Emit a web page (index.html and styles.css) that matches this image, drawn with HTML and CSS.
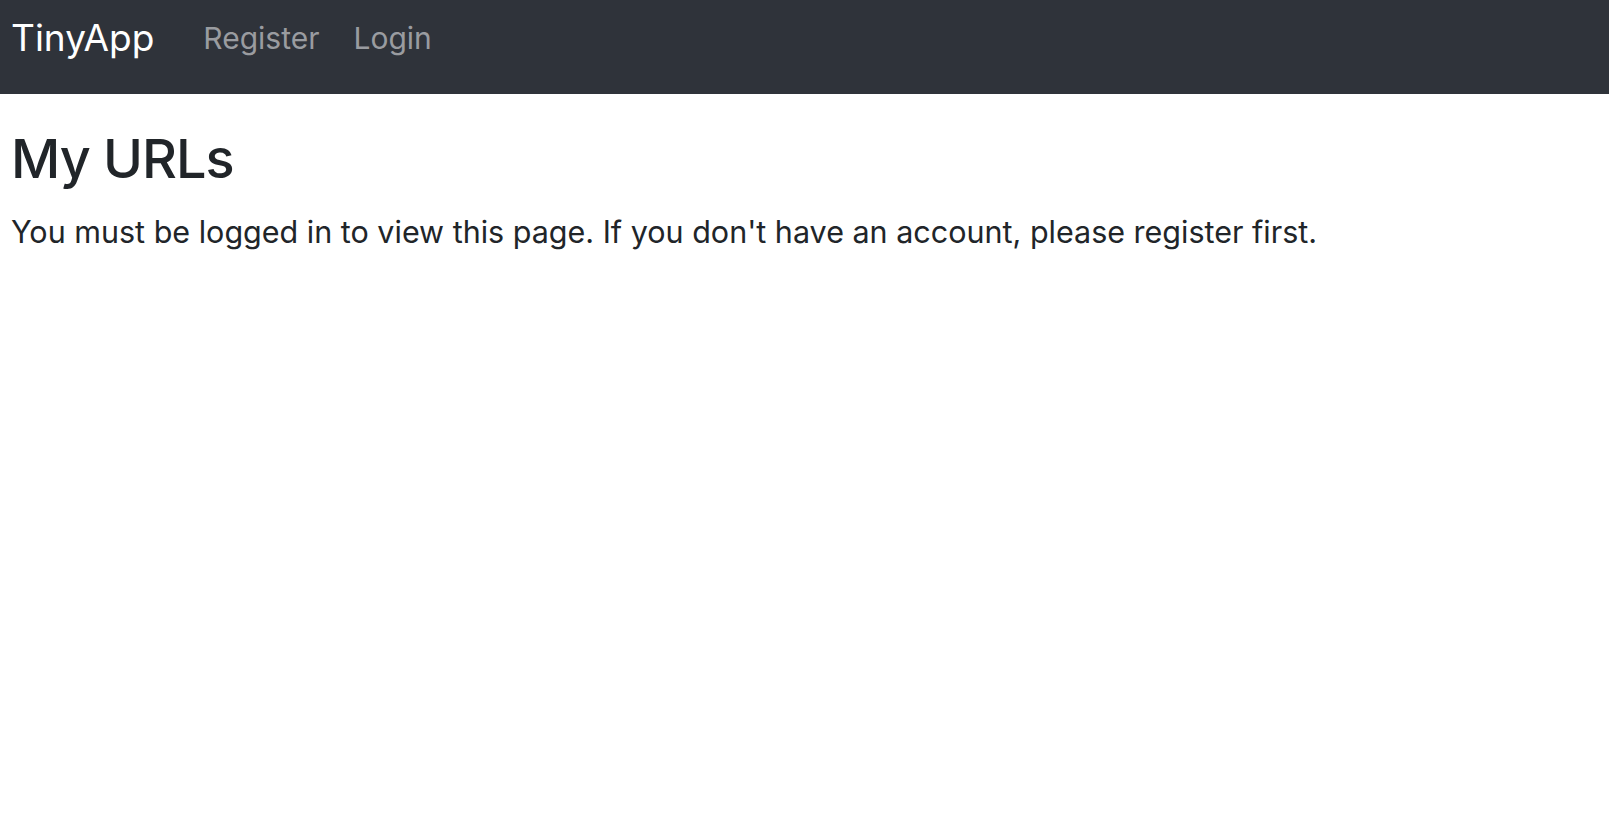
FILE: index.html
```html
<!DOCTYPE html>
<html lang="en">
<head>
<meta charset="utf-8">
<title>TinyApp</title>
<link rel="stylesheet" href="styles.css">
</head>
<body>
<nav class="navbar">
  <a class="brand" href="#">TinyApp</a>
  <div class="nav-links">
    <a class="nav-link" href="#">Register</a>
    <a class="nav-link" href="#">Login</a>
  </div>
</nav>
<main class="content">
  <h1 class="title">My URLs</h1>
  <p class="message">You must be logged in to view this page. If you don't have an account, please register first.</p>
</main>
</body>
</html>
```
FILE: styles.css
```css
html, body {
  margin: 0;
  padding: 0;
  background: #ffffff;
  font-family: Inter, "Liberation Sans", sans-serif;
  color: #212529;
}

.navbar {
  height: 94px;
  box-sizing: border-box;
  background: #2f333a;
  display: flex;
  align-items: flex-start;
  padding: 16px 0 0 11px;
}

.brand {
  color: #ffffff;
  text-decoration: none;
  font-size: 37px;
  letter-spacing: 0;
  line-height: 1.2;
  margin-right: 49px;
}

.nav-links {
  display: flex;
  gap: 34px;
  margin-top: 4px;
}

.nav-link {
  color: #9a9ca0;
  text-decoration: none;
  font-size: 30px;
  line-height: 1.2;
}

.content {
  padding: 0 11px;
}

.title {
  margin: 38px 0 0;
  font-size: 54px;
  letter-spacing: -1px;
  font-weight: 500;
  line-height: 1;
}

.message {
  margin: 28px 0 0;
  font-size: 30.5px;
  line-height: 1.2;
}
```
